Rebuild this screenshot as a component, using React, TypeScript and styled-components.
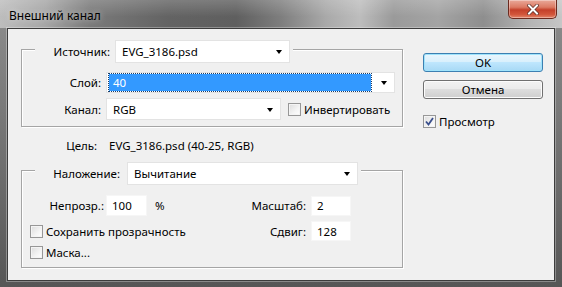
import React, { FC } from 'react';
import styled, { createGlobalStyle } from 'styled-components';

const GlobalStyle = createGlobalStyle`
    html, body {
        margin: 0;
        padding: 0;
        background: #fff;
    }
    body {
        font-family: "Noto Sans", "Open Sans", sans-serif;
        font-size: 11.5px;
        color: #000;
    }
`;

const Window = styled.div`
    width: 562px;
    height: 287px;
    display: flex;
    flex-direction: column;
    background: linear-gradient(180deg, #8e8e8e 0%, #707070 55%, #565656 100%);
    overflow: hidden;
`;

const TitleBar = styled.div`
    height: 28px;
    flex: none;
    display: flex;
    justify-content: space-between;
    align-items: flex-start;
    padding-left: 9px;
    background:
        linear-gradient(180deg, rgba(255, 255, 255, .18) 0%, rgba(0, 0, 0, 0) 60%),
        linear-gradient(90deg, #bdbdbd 0%, #a6a6a6 8%, #7a7a7a 16%, #636363 30%, #5f5f5f 42%,
            #7e7e7e 50%, #a9a9a9 58%, #bdbdbd 64%, #9a9a9a 70%, #a4a4a4 78%, #8e8e8e 86%, #b4b4b4 94%, #c6c6c6 100%);
`;

const Title = styled.div`
    margin-top: 8px;
    line-height: 16px;
    font-size: 12px;
    color: #000;
    text-shadow: 0 0 6px rgba(255, 255, 255, .6);
`;

const CloseButton = styled.div`
    width: 49px;
    height: 19px;
    margin-right: 5px;
    box-sizing: border-box;
    border: 1px solid #6b2a1f;
    border-top: none;
    border-radius: 0 0 5px 5px;
    display: flex;
    align-items: center;
    justify-content: center;
    background: linear-gradient(180deg, #e9a999 0%, #dc7a63 40%, #c4402a 55%, #d2553a 80%, #e2856a 100%);
    box-shadow: inset 0 0 0 1px rgba(255, 255, 255, .35);
`;

const Client = styled.div`
    flex: 1;
    margin: 0 7px 6px 7px;
    display: flex;
    background: #f0f0f0;
    border: 1px solid #3c3c3c;
    box-shadow: 0 0 0 1px rgba(255, 255, 255, .3);
`;

const LeftPane = styled.div`
    width: 382px;
    padding-left: 13px;
    display: flex;
    flex-direction: column;
`;

const RightPane = styled.div`
    padding: 24px 0 0 20px;
    display: flex;
    flex-direction: column;
`;

const Group = styled.div<{ $top: number }>`
    margin-top: ${p => p.$top}px;
    border: 1px solid #a5a5a5;
    box-shadow: 1px 1px 0 #fff, inset 1px 1px 0 #fff;
    display: flex;
    flex-direction: column;
`;

const Legend = styled.div<{ $lift: number }>`
    align-self: flex-start;
    margin: -${p => p.$lift}px 0 0 13px;
    padding-right: 3px;
    display: flex;
    align-items: center;
    background: #f0f0f0;
`;

const Label = styled.span<{ $w: number; $gap?: number }>`
    width: ${p => p.$w}px;
    margin-right: ${p => p.$gap ?? 5}px;
    flex: none;
    text-align: right;
    white-space: nowrap;
`;

const Row = styled.div<{ $top: number; $h: number }>`
    margin-top: ${p => p.$top}px;
    height: ${p => p.$h}px;
    display: flex;
    align-items: center;
`;

const SelectBox = styled.div<{ $w: number; $h: number }>`
    width: ${p => p.$w}px;
    height: ${p => p.$h}px;
    box-sizing: border-box;
    flex: none;
    display: flex;
    align-items: center;
    background: #fff;
    border: 1px solid #e3e3e3;
`;

const SelectValue = styled.span<{ $active?: boolean }>`
    flex: 1;
    align-self: stretch;
    display: flex;
    align-items: center;
    margin: ${p => (p.$active ? '1px 2px' : '0')};
    padding-left: ${p => (p.$active ? '4px' : '6px')};
    color: ${p => (p.$active ? '#fff' : '#000')};
    background: ${p => (p.$active ? '#3399ff' : 'transparent')};
    outline: ${p => (p.$active ? '1px dotted #1a3d66' : 'none')};
    white-space: nowrap;
`;

const Arrow = styled.span`
    width: 0;
    height: 0;
    margin: 1px 7px 0 8px;
    border-left: 3.5px solid transparent;
    border-right: 3.5px solid transparent;
    border-top: 4px solid #000;
`;

const TextInput = styled.div<{ $w: number; $h: number }>`
    width: ${p => p.$w}px;
    height: ${p => p.$h}px;
    box-sizing: border-box;
    flex: none;
    padding-left: 5px;
    display: flex;
    align-items: center;
    background: #fff;
    border: 1px solid #f6f6f6;
`;

const Side = styled.div`
    margin-left: auto;
    margin-right: 51px;
    display: flex;
    align-items: center;
`;

const TargetRow = styled.div`
    margin-top: 10px;
    height: 16px;
    display: flex;
    align-items: center;
`;

const Check = styled.label<{ $indent?: number }>`
    display: flex;
    align-items: center;
    margin-left: ${p => p.$indent ?? 0}px;
    white-space: nowrap;
`;

const CheckBox = styled.span`
    width: 13px;
    height: 13px;
    box-sizing: border-box;
    flex: none;
    margin-right: 3px;
    border: 1px solid #979797;
    background: linear-gradient(135deg, #dcdcdc 0%, #f4f4f4 60%, #fff 100%);
    box-shadow: inset 0 0 0 1px #f4f4f4;
    display: flex;
    align-items: center;
    justify-content: center;
`;

const Button = styled.div<{ $primary?: boolean }>`
    width: 120px;
    height: 19px;
    box-sizing: border-box;
    display: flex;
    align-items: center;
    justify-content: center;
    border-radius: 3px;
    border: 1px solid ${p => (p.$primary ? '#3c7fb1' : '#707070')};
    background: ${p => (p.$primary
        ? 'linear-gradient(180deg, #eaf6fd 0%, #d9f0fc 45%, #bee6fd 50%, #a7d9f5 100%)'
        : 'linear-gradient(180deg, #f2f2f2 0%, #ebebeb 45%, #dddddd 50%, #cfcfcf 100%)')};
    box-shadow: inset 0 0 0 1px ${p => (p.$primary ? '#9fe3fb' : '#fcfcfc')};
    & + & {
        margin-top: 8px;
    }
`;

const PreviewCheck = styled(Check)`
    margin-top: 15px;
    height: 14px;
`;

const Percent = styled.span`
    margin-left: 8px;
`;

const CheckMark: FC = () => (
    <svg width="9" height="9" viewBox="0 0 9 9">
        <path d="M1 4.5 L3.5 7.5 L8 1" fill="none" stroke="#3a4f8c" strokeWidth="1.8" />
    </svg>
);

const CloseGlyph: FC = () => (
    <svg width="12" height="11" viewBox="0 0 12 11">
        <path d="M2 1.5 L10 9.5 M10 1.5 L2 9.5" stroke="#5a2a22" strokeWidth="3.4" strokeLinecap="square" />
        <path d="M2 1.5 L10 9.5 M10 1.5 L2 9.5" stroke="#fff" strokeWidth="2" strokeLinecap="square" />
    </svg>
);

const Select: FC<{ w: number; h: number; value: string; active?: boolean }> = ({ w, h, value, active }) => (
    <SelectBox $w={w} $h={h}>
        <SelectValue $active={active}>{value}</SelectValue>
        <Arrow />
    </SelectBox>
);

const Checkbox: FC<{ label: string; checked?: boolean; indent?: number }> = ({ label, checked, indent }) => (
    <Check $indent={indent}>
        <CheckBox>{checked && <CheckMark />}</CheckBox>
        {label}
    </Check>
);

const App: FC = () => (
    <>
        <GlobalStyle />
        <Window>
            <TitleBar>
                <Title>Внешний канал</Title>
                <CloseButton><CloseGlyph /></CloseButton>
            </TitleBar>

            <Client>
                <LeftPane>
                    <Group $top={20}>
                        <Legend $lift={10}>
                            <Label $w={75}>Источник:</Label>
                            <Select w={175} h={23} value="EVG_3186.psd" />
                        </Legend>
                        <Row $top={9} $h={21}>
                            <Label $w={79}>Слой:</Label>
                            <Select w={289} h={21} value="40" active />
                        </Row>
                        <Row $top={5} $h={22}>
                            <Label $w={79}>Канал:</Label>
                            <Select w={175} h={22} value="RGB" />
                            <Checkbox label="Инвертировать" indent={7} />
                        </Row>
                        <Row $top={0} $h={6} />
                    </Group>

                    <TargetRow>
                        <Label $w={76} $gap={12}>Цель:</Label>
                        EVG_3186.psd (40-25, RGB)
                    </TargetRow>

                    <Group $top={17}>
                        <Legend $lift={9}>
                            <Label $w={85} $gap={7}>Наложение:</Label>
                            <Select w={231} h={23} value="Вычитание" />
                        </Legend>
                        <Row $top={10} $h={21}>
                            <Label $w={82} $gap={2}>Непрозр.:</Label>
                            <TextInput $w={41} $h={21}>100</TextInput>
                            <Percent>%</Percent>
                            <Side>
                                <Label $w={90}>Масштаб:</Label>
                                <TextInput $w={40} $h={20}>2</TextInput>
                            </Side>
                        </Row>
                        <Row $top={5} $h={20}>
                            <Checkbox label="Сохранить прозрачность" indent={8} />
                            <Side>
                                <Label $w={90}>Сдвиг:</Label>
                                <TextInput $w={40} $h={20}>128</TextInput>
                            </Side>
                        </Row>
                        <Row $top={4} $h={14}>
                            <Checkbox label="Маска..." indent={8} />
                        </Row>
                        <Row $top={0} $h={8} />
                    </Group>
                </LeftPane>

                <RightPane>
                    <Button $primary>OK</Button>
                    <Button>Отмена</Button>
                    <PreviewCheck>
                        <CheckBox><CheckMark /></CheckBox>
                        Просмотр
                    </PreviewCheck>
                </RightPane>
            </Client>
        </Window>
    </>
);

export default App;
